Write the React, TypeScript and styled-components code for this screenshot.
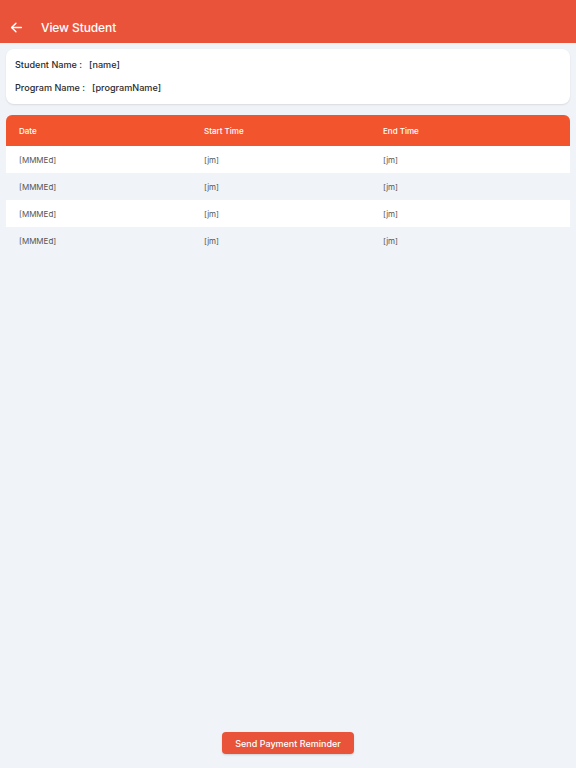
import React from 'react'
import styled, { createGlobalStyle } from 'styled-components'

const GlobalStyle = createGlobalStyle`
  html, body {
    margin: 0;
    padding: 0;
    background: #f0f3f8;
    font-family: "Inter", "Noto Sans", sans-serif;
  }
  #root {
    min-height: 100vh;
  }
`

const Page = styled.div`
  display: flex;
  flex-direction: column;
  height: 100vh;
  background: #f0f3f8;
`

const AppBar = styled.header`
  display: flex;
  align-items: center;
  box-sizing: border-box;
  height: 43px;
  padding: 12px 10px 0;
  gap: 18px;
  background: #e8533a;
  color: #fff;
`

const BackButton = styled.button`
  display: flex;
  align-items: center;
  justify-content: center;
  width: 13px;
  height: 13px;
  padding: 0;
  border: none;
  background: transparent;
  color: #fff;
`

const Title = styled.h1`
  margin: 0;
  font-family: "Inter", sans-serif;
  font-size: 12px;
  font-weight: 500;
  letter-spacing: -0.1px;
`

const Content = styled.main`
  flex: 1;
  display: flex;
  flex-direction: column;
  padding: 6px 6px 0;
`

const InfoCard = styled.section`
  display: flex;
  flex-direction: column;
  gap: 10px;
  padding: 9px 9px 10px;
  background: #fff;
  border-radius: 8px;
  box-shadow: 0 1px 2px rgba(0, 0, 0, 0.1);
`

const InfoRow = styled.div`
  display: flex;
  gap: 7px;
  font-size: 9.1px;
  line-height: 13px;
  font-weight: 500;
  color: #2a2a2a;
`

const Table = styled.div`
  margin-top: 11px;
  border-radius: 6px 6px 0 0;
  overflow: hidden;
`

const Row = styled.div<{ head?: boolean; odd?: boolean }>`
  display: grid;
  grid-template-columns: 185px 179px 1fr;
  align-items: center;
  height: ${({ head }) => (head ? '31px' : '27px')};
  padding-left: 13px;
  font-size: 8px;
  background: ${({ head, odd }) => (head ? '#f2552e' : odd ? 'transparent' : '#fff')};
  color: ${({ head }) => (head ? '#fff' : '#555')};
  font-weight: ${({ head }) => (head ? 500 : 400)};
`

const Footer = styled.div`
  display: flex;
  justify-content: center;
  padding: 0 0 14px;
`

const ReminderButton = styled.button`
  height: 22px;
  padding: 0 13px;
  border: none;
  border-radius: 4px;
  background: #e8533a;
  color: #fff;
  font-family: inherit;
  font-size: 9px;
  font-weight: 500;
  box-shadow: 0 1px 2px rgba(0, 0, 0, 0.15);
`

const sessions = [0, 1, 2, 3].map(() => ({ date: '[MMMEd]', start: '[jm]', end: '[jm]' }))

export default function App() {
  return (
    <Page>
      <GlobalStyle />
      <AppBar>
        <BackButton aria-label="Back">
          <svg width="13" height="13" viewBox="0 0 24 24" fill="none" stroke="currentColor" strokeWidth="2.6" strokeLinecap="round" strokeLinejoin="round">
            <path d="M21 12H3" />
            <path d="M11 4l-8 8 8 8" />
          </svg>
        </BackButton>
        <Title>View Student</Title>
      </AppBar>
      <Content>
        <InfoCard>
          <InfoRow>
            <span>Student Name :</span>
            <span>[name]</span>
          </InfoRow>
          <InfoRow>
            <span>Program Name :</span>
            <span>[programName]</span>
          </InfoRow>
        </InfoCard>
        <Table>
          <Row head>
            <span>Date</span>
            <span>Start Time</span>
            <span>End Time</span>
          </Row>
          {sessions.map((s, i) => (
            <Row key={i} odd={i % 2 === 1}>
              <span>{s.date}</span>
              <span>{s.start}</span>
              <span>{s.end}</span>
            </Row>
          ))}
        </Table>
      </Content>
      <Footer>
        <ReminderButton>Send Payment Reminder</ReminderButton>
      </Footer>
    </Page>
  )
}
